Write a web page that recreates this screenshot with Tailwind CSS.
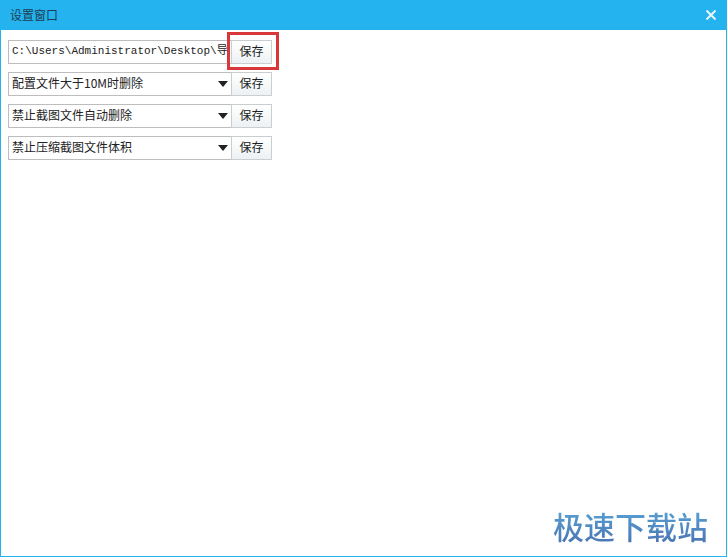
<!DOCTYPE html>
<html lang="zh">
<head>
  <meta charset="UTF-8" />
  <title>设置窗口</title>
  <script src="https://cdn.jsdelivr.net/npm/@tailwindcss/browser@4"></script>
</head>
<body class="w-[727px] h-[557px] overflow-hidden bg-white font-['Noto_Sans_CJK_SC',sans-serif]">
  <div class="relative w-full h-full flex flex-col border-x border-b border-[#24b3ee]">
    <!-- Title bar -->
    <div class="h-[30px] -mx-px shrink-0 bg-[#24b3ee] flex items-center justify-between pl-[10px] pr-[11px] text-[12px] text-[#1d3f55]">
      <span class="pb-[1px]">设置窗口</span>
      <svg width="10" height="10" viewBox="0 0 10 10" class="stroke-[#e8f6fc] mb-[1px]" stroke-width="2"><path d="M0.5 0.5 9.5 9.5M9.5 0.5 0.5 9.5" /></svg>
    </div>

    <!-- Rows -->
    <div class="pt-[10px] pl-[7px] flex flex-col gap-2 text-[12px] text-[#222]">
      <div class="flex h-6">
        <div class="w-[223px] border border-r-0 border-[#bdbdbd] pl-[3px] pb-[1px] flex items-center overflow-hidden whitespace-nowrap font-['Liberation_Mono','Noto_Sans_CJK_SC',monospace] text-[11px]">C:\Users\Administrator\Desktop\导</div>
        <button class="w-[41px] pb-[2px] border border-[#c9ced1] bg-gradient-to-b from-white to-[#edf1f3]">保存</button>
      </div>
      <div class="flex h-6">
        <div class="w-[223px] border border-r-0 border-[#bdbdbd] pl-[3px] pr-[3px] flex items-center justify-between">
          <span class="pb-[2px]">配置文件大于10M时删除</span>
          <span class="w-0 h-0 border-x-[5px] border-x-transparent border-t-[6px] border-t-[#222]"></span>
        </div>
        <button class="w-[41px] pb-[2px] border border-[#c9ced1] bg-gradient-to-b from-white to-[#edf1f3]">保存</button>
      </div>
      <div class="flex h-6">
        <div class="w-[223px] border border-r-0 border-[#bdbdbd] pl-[3px] pr-[3px] flex items-center justify-between">
          <span class="pb-[2px]">禁止截图文件自动删除</span>
          <span class="w-0 h-0 border-x-[5px] border-x-transparent border-t-[6px] border-t-[#222]"></span>
        </div>
        <button class="w-[41px] pb-[2px] border border-[#c9ced1] bg-gradient-to-b from-white to-[#edf1f3]">保存</button>
      </div>
      <div class="flex h-6">
        <div class="w-[223px] border border-r-0 border-[#bdbdbd] pl-[3px] pr-[3px] flex items-center justify-between">
          <span class="pb-[2px]">禁止压缩截图文件体积</span>
          <span class="w-0 h-0 border-x-[5px] border-x-transparent border-t-[6px] border-t-[#222]"></span>
        </div>
        <button class="w-[41px] pb-[2px] border border-[#c9ced1] bg-gradient-to-b from-white to-[#edf1f3]">保存</button>
      </div>
    </div>

    <!-- Red highlight over first save button -->
    <div class="absolute left-[226px] top-[32px] w-[52px] h-[38px] border-[3px] border-[#d9383a]"></div>

    <!-- Watermark -->
    <div class="absolute left-[552px] top-[506px] text-[31px] leading-[40px] font-medium bg-gradient-to-b from-[#58a6d6] to-[#4a72b2] bg-clip-text text-transparent">极速下载站</div>
  </div>
</body>
</html>
